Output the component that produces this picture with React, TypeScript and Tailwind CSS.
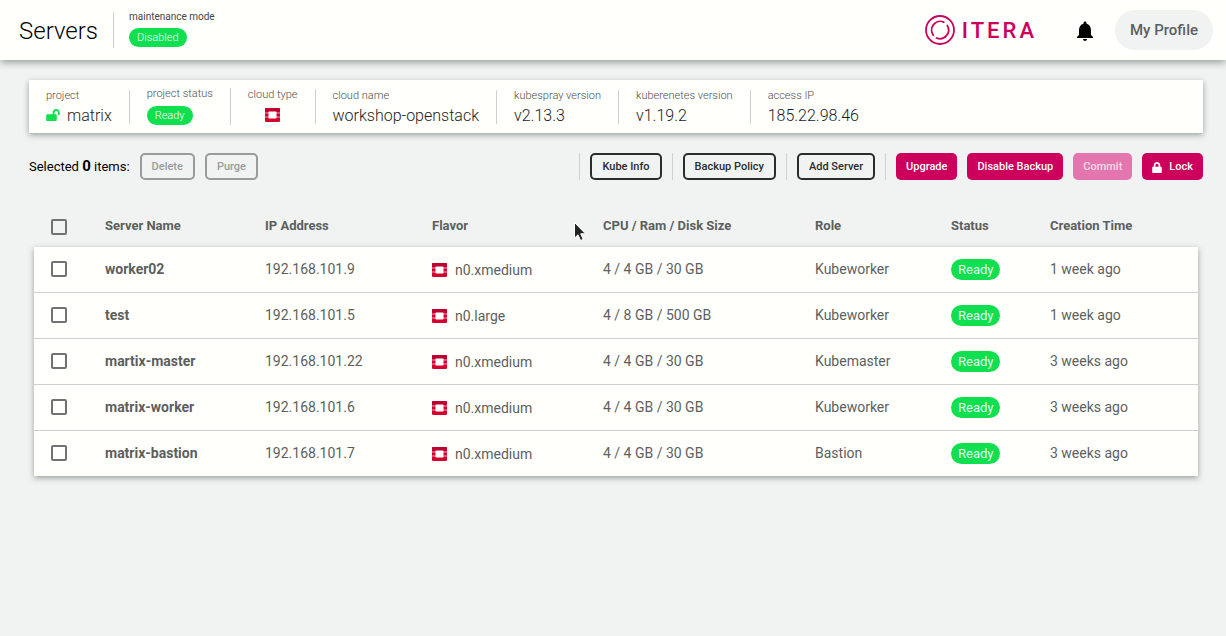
import type { ReactNode } from 'react';
import { MdNotifications } from 'react-icons/md';
import { FaLock, FaLockOpen } from 'react-icons/fa';

type Server = {
  name: string;
  ip: string;
  flavor: string;
  size: string;
  role: string;
  created: string;
};

const servers: Server[] = [
  { name: 'worker02', ip: '192.168.101.9', flavor: 'n0.xmedium', size: '4 / 4 GB / 30 GB', role: 'Kubeworker', created: '1 week ago' },
  { name: 'test', ip: '192.168.101.5', flavor: 'n0.large', size: '4 / 8 GB / 500 GB', role: 'Kubeworker', created: '1 week ago' },
  { name: 'martix-master', ip: '192.168.101.22', flavor: 'n0.xmedium', size: '4 / 4 GB / 30 GB', role: 'Kubemaster', created: '3 weeks ago' },
  { name: 'matrix-worker', ip: '192.168.101.6', flavor: 'n0.xmedium', size: '4 / 4 GB / 30 GB', role: 'Kubeworker', created: '3 weeks ago' },
  { name: 'matrix-bastion', ip: '192.168.101.7', flavor: 'n0.xmedium', size: '4 / 4 GB / 30 GB', role: 'Bastion', created: '3 weeks ago' },
];

const columns = ['Server Name', 'IP Address', 'Flavor', 'CPU / Ram / Disk Size', 'Role', 'Status', 'Creation Time'];

function OpenStackIcon() {
  return (
    <svg viewBox="0 0 15 14" className="block h-[14px] w-[15px] shrink-0" aria-hidden="true">
      <rect width="15" height="14" rx="1.2" fill="#d6002f" />
      <path d="M1.200 0h12.600A1.200 1.200 0 0 1 15 1.200V4H0V1.200A1.200 1.200 0 0 1 1.200 0z" fill="#bd002e" />
      <path d="M0 5h15M0 9h15" stroke="#fff" strokeWidth="0.6" />
      <rect x="3.500" y="3.500" width="8" height="7" rx="0.8" fill="#fff" />
    </svg>
  );
}

function Logo() {
  return (
    <a href="#" aria-label="ITERA" className="flex items-center gap-[7px] text-[#cc005c]">
      <svg viewBox="0 0 30 30" className="size-[30px]" fill="none" stroke="currentColor" aria-hidden="true">
        <circle cx="15" cy="15" r="14" strokeWidth="1.8" />
        <path d="M8.300 20.200A8.700 8.700 0 0 1 18.800 7.100" strokeWidth="1.8" strokeLinecap="round" />
        <path d="M22.300 10.500A8.700 8.700 0 0 1 11.500 23" strokeWidth="1.8" strokeLinecap="round" />
      </svg>
      <span className="pt-0.5 text-[22px] leading-[30px] font-medium tracking-[3px]">ITERA</span>
    </a>
  );
}

function InfoItem({ label, children, last = false }: { label: string; children: ReactNode; last?: boolean }) {
  return (
    <div className={last ? 'px-[17px]' : 'border-r border-[#cfd1d0] px-[17px]'}>
      <div className="text-[11px] leading-[12px] font-light text-[#4c4e4d]">{label}</div>
      {children}
    </div>
  );
}

function Value({ children }: { children: ReactNode }) {
  return <div className="flex items-center gap-[7px] pt-[5px] text-[16px] leading-[17px] font-light text-[#1c1c1c]">{children}</div>;
}

function SmallPill({ children }: { children: ReactNode }) {
  return (
    <span className="mt-1.5 block w-fit rounded-full bg-[#10df50] px-2 text-[11px] leading-[19px] font-light text-white">{children}</span>
  );
}

function OutlineButton({ children, disabled = false }: { children: ReactNode; disabled?: boolean }) {
  return (
    <button
      type="button"
      disabled={disabled}
      className="h-[27px] rounded-[5px] border-2 border-[#2b2c2c] px-2.5 pt-px text-[11px] font-medium text-[#2b2c2c] disabled:border-[#9a9b9b] disabled:text-[#9a9b9b]"
    >
      {children}
    </button>
  );
}

function SolidButton({ children, disabled = false }: { children: ReactNode; disabled?: boolean }) {
  return (
    <button
      type="button"
      disabled={disabled}
      className="flex h-[27px] items-center gap-[7px] rounded-[5px] bg-[#cc005c] px-2.5 pt-px text-[11px] font-medium text-white disabled:bg-[#e376ae] disabled:text-[#f8dce9]"
    >
      {children}
    </button>
  );
}

function Separator() {
  return <div className="h-[27px] w-px bg-[#cfd1d0]" />;
}

function CheckBox({ label }: { label: string }) {
  return (
    <input
      type="checkbox"
      aria-label={label}
      className="block size-4 appearance-none rounded-[2px] border-2 border-[#717272] checked:bg-[#cc005c]"
    />
  );
}

export default function App() {
  return (
    <div className="relative min-h-screen bg-[#f1f3f3] font-[Roboto,sans-serif] text-black">
      <header className="flex h-[60px] items-center justify-between bg-[#fffffc] pr-[13px] pl-[19px] shadow-[0_2px_8px_rgba(0,0,0,0.4)]">
        <div className="flex items-center">
          <h1 className="pt-0.5 pr-[15px] text-[24px] leading-[32px] font-light">Servers</h1>
          <div className="border-l border-[#cfd1d0] pb-px pl-[15px]">
            <div className="text-[10px] leading-[10px] text-[#444645]">maintenance mode</div>
            <SmallPill>Disabled</SmallPill>
          </div>
        </div>
        <div className="flex items-center">
          <Logo />
          <button type="button" aria-label="Notifications" className="mr-[18px] ml-9 pt-0.5">
            <MdNotifications className="size-6" />
          </button>
          <button type="button" className="h-10 rounded-full bg-[#f1f3f3] px-[15px] text-[15px] font-medium text-[#5c5f5e]">
            My Profile
          </button>
        </div>
      </header>

      <main className="pt-5 pr-[23px] pl-[29px]">
        <section className="flex h-[53px] items-center bg-[#fffffc] shadow-[0_2px_6px_rgba(0,0,0,0.35)]">
          <InfoItem label="project">
            <Value>
              <FaLockOpen className="h-[12px] w-[14px] text-[#10df50]" />
              matrix
            </Value>
          </InfoItem>
          <InfoItem label="project status">
            <SmallPill>Ready</SmallPill>
          </InfoItem>
          <InfoItem label="cloud type">
            <div className="flex h-[23px] items-start justify-center pt-[7px]">
              <OpenStackIcon />
            </div>
          </InfoItem>
          <InfoItem label="cloud name"><Value>workshop-openstack</Value></InfoItem>
          <InfoItem label="kubespray version"><Value>v2.13.3</Value></InfoItem>
          <InfoItem label="kuberenetes version"><Value>v1.19.2</Value></InfoItem>
          <InfoItem label="access IP" last><Value>185.22.98.46</Value></InfoItem>
        </section>

        <div className="mt-5 flex items-center justify-between">
          <div className="flex items-center gap-2.5">
            <p className="text-[13px] leading-[20px]">
              Selected <strong className="text-[15px] font-bold">0</strong> items:
            </p>
            <OutlineButton disabled>Delete</OutlineButton>
            <OutlineButton disabled>Purge</OutlineButton>
          </div>
          <div className="flex items-center gap-2.5">
            <Separator />
            <OutlineButton>Kube Info</OutlineButton>
            <Separator />
            <OutlineButton>Backup Policy</OutlineButton>
            <Separator />
            <OutlineButton>Add Server</OutlineButton>
            <Separator />
            <SolidButton>Upgrade</SolidButton>
            <SolidButton>Disable Backup</SolidButton>
            <SolidButton disabled>Commit</SolidButton>
            <SolidButton>
              <FaLock className="h-[11px] w-[10px]" />
              Lock
            </SolidButton>
          </div>
        </div>

        <div className="mt-[25px] px-[5px]">
          <table className="w-full table-fixed border-separate border-spacing-0 text-left text-[14px] leading-[20px] text-[#5c5f5e]">
            <colgroup>
              <col className="w-[71px]" />
              <col className="w-[160px]" />
              <col className="w-[167px]" />
              <col className="w-[171px]" />
              <col className="w-[212px]" />
              <col className="w-[136px]" />
              <col className="w-[99px]" />
              <col className="w-[148px]" />
            </colgroup>
            <thead>
              <tr className="h-[42px]">
                <th className="pt-0.5 pl-[17px]"><CheckBox label="Select all servers" /></th>
                {columns.map((column) => (
                  <th key={column} className="text-[13px] font-bold">{column}</th>
                ))}
              </tr>
            </thead>
            <tbody className="bg-[#fffffc] shadow-[0_2px_6px_rgba(0,0,0,0.35)]">
              {servers.map((server) => (
                <tr
                  key={server.name}
                  className="h-[46px] last:h-[45px] [&>td]:border-b [&>td]:border-[#cfd1d0] [&>td]:pb-px last:[&>td]:border-b-0"
                >
                  <td className="pl-[17px]"><CheckBox label={`Select ${server.name}`} /></td>
                  <td className="font-bold">{server.name}</td>
                  <td>{server.ip}</td>
                  <td>
                    <div className="flex items-center gap-2 pt-px">
                      <OpenStackIcon />
                      {server.flavor}
                    </div>
                  </td>
                  <td>{server.size}</td>
                  <td>{server.role}</td>
                  <td>
                    <span className="block w-fit rounded-full bg-[#10df50] px-[7px] text-[13px] leading-[21px] text-[#e6fbed]">Ready</span>
                  </td>
                  <td>{server.created}</td>
                </tr>
              ))}
            </tbody>
          </table>
        </div>
      </main>

      <svg viewBox="0 0 14 22" className="pointer-events-none absolute top-[221px] left-[573px] h-[22px] w-[14px]" aria-hidden="true">
        <path d="M1.500 1.500v15.500l3.500-3.200 2.600 5.700 2.600-1.200-2.500-5.500h4.800z" fill="#222" stroke="#fff" strokeWidth="1" />
      </svg>
    </div>
  );
}
